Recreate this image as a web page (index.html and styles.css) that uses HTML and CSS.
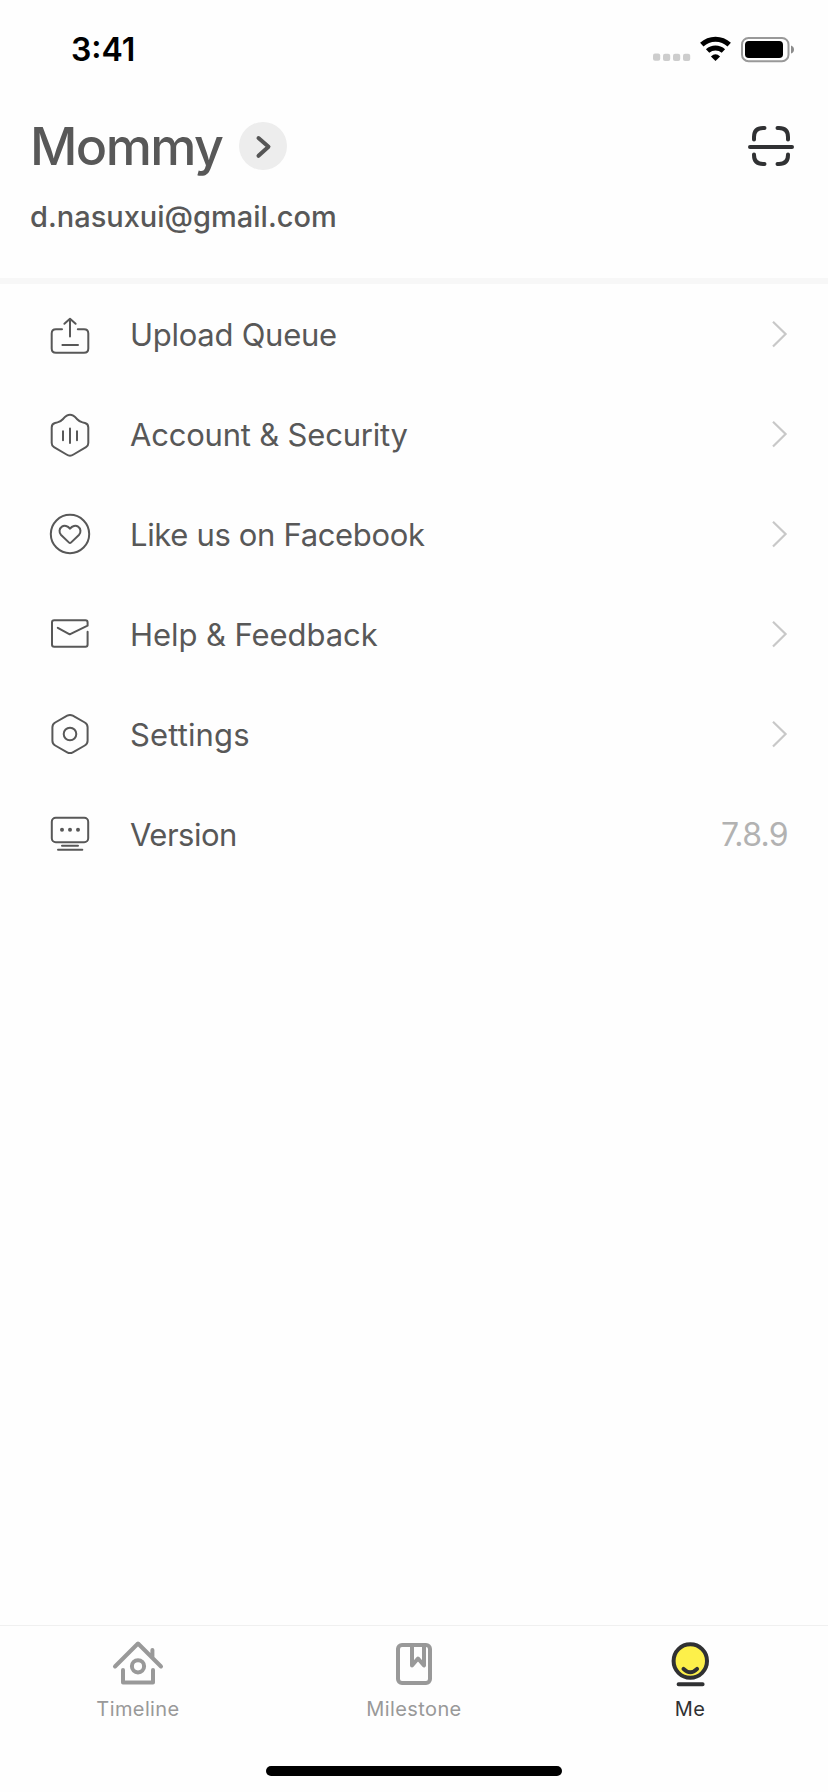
FILE: index.html
```html
<!DOCTYPE html>
<html lang="en">
<head>
<meta charset="utf-8">
<title>Me</title>
<link rel="stylesheet" href="styles.css">
</head>
<body>
<div class="screen">
  <div class="status">
    <span class="time">3:41</span>
    <svg class="status-icons" width="148" height="36" viewBox="650 31 148 36">
      <g fill="#cdcdcd"><rect x="653" y="53.5" width="7.2" height="7.2" rx="2"/><rect x="663" y="53.8" width="7.2" height="7.2" rx="2"/><rect x="673" y="53.8" width="7.2" height="7.2" rx="2"/><rect x="683" y="53.8" width="7.2" height="7.2" rx="2"/></g>
      <path d="M701.8 44.6A20 20 0 0 1 729.2 44.6M707.6 51A11.8 11.8 0 0 1 723.4 51" fill="none" stroke="#000" stroke-width="5"/>
      <path d="M710.9 56.5Q715.5 52.2 720.1 56.5L715.5 61Z"/>
      <rect x="742" y="38" width="46.5" height="23.2" rx="6.5" fill="none" stroke="#999" stroke-width="2"/>
      <rect x="745" y="41" width="38" height="17" rx="3.8"/>
      <path d="M791 45.5Q794 46.5 794 49.5T791 53.5Z" fill="#8c8c8c"/>
    </svg>
  </div>
  <header class="profile">
    <div class="profile-row">
      <h1 class="name">Mommy</h1>
      <svg class="name-more" width="48" height="48" viewBox="0 0 48 48" fill="none"><circle cx="24" cy="24" r="24" fill="#ededed"/><path d="M19.5 16L29.5 24.7L19.5 33.8" stroke="#555" stroke-width="4" stroke-linecap="round" stroke-linejoin="round"/></svg>
      <svg class="scan" width="48" height="48" viewBox="0 0 48 48" fill="none" stroke="#303133" stroke-width="4" stroke-linecap="round"><path d="M3 25H45M7 17.5V15Q7 6 16 6H17.5M30.5 6H32Q41 6 41 15V17.5M7 32.5V33Q7 42 16 42H17.5M30.5 42H32Q41 42 41 33V32.5"/></svg>
    </div>
    <div class="email">d.nasuxui@gmail.com</div>
  </header>
  <main class="menu">
    <div class="row">
      <svg class="icon" viewBox="0 0 48 48"><path d="M16 19.3H10Q5.7 19.3 5.7 23.6V38.4Q5.7 42.7 10 42.7H38Q42.3 42.7 42.3 38.4V23.6Q42.3 19.3 38 19.3H31.8M24 26.5V9M18.4 13.8L24 8.8L29.6 13.8M16.4 35H32"/></svg>
      <span class="label upload">Upload Queue</span><svg class="chev" viewBox="0 0 16 28"><path d="M1 1.7L13.6 14L1 26.5"/></svg>
    </div>
    <div class="row">
      <svg class="icon" viewBox="0 0 48 48"><path d="M20.8 5.7Q24 3.8 27.2 5.7Q29 6.8 31.2 9.2Q33.4 11.6 36.5 12.4L39 13Q42.3 13.8 42.3 17.5V33Q42.3 35.8 40 37.2L27.5 44.5Q24 46.8 20.5 44.5L8 37.2Q5.7 35.8 5.7 33V17.5Q5.7 13.8 9 13L11.5 12.4Q14.6 11.6 16.8 9.2Q19 6.8 20.8 5.7ZM17 21.3V30.3M24 18.5V33M31 21.3V30.3"/></svg>
      <span class="label account">Account &amp; Security</span><svg class="chev" viewBox="0 0 16 28"><path d="M1 1.7L13.6 14L1 26.5"/></svg>
    </div>
    <div class="row">
      <svg class="icon" viewBox="0 0 48 48"><circle cx="24" cy="24" r="19.2"/><path d="M24 18.7C21.8 16 18.4 15 15.9 16.6C13 18.5 12.8 22.6 15.1 25L22.8 32.4Q24 33.6 25.2 32.4L32.9 25C35.2 22.6 35 18.5 32.1 16.6C29.6 15 26.2 16 24 18.7Z"/></svg>
      <span class="label like">Like us on Facebook</span><svg class="chev" viewBox="0 0 16 28"><path d="M1 1.7L13.6 14L1 26.5"/></svg>
    </div>
    <div class="row">
      <svg class="icon" viewBox="0 0 48 48"><path d="M11.8 17.8L23.7 24.3L41.6 15.7V12.4Q41.6 10.2 39.4 10.2H8.2Q6 10.2 6 12.4V34.5Q6 36.7 8.2 36.7H39.4Q41.6 36.7 41.6 34.5V21.8"/></svg>
      <span class="label help">Help &amp; Feedback</span><svg class="chev" viewBox="0 0 16 28"><path d="M1 1.7L13.6 14L1 26.5"/></svg>
    </div>
    <div class="row">
      <svg class="icon" viewBox="0 0 48 48"><path d="M21.2 5.7Q24 4.1 26.8 5.7L38.8 12.5Q41.6 14.1 41.6 17.3V30.7Q41.6 33.9 38.8 35.5L26.8 42.3Q24 43.9 21.2 42.3L9.2 35.5Q6.4 33.9 6.4 30.7V17.3Q6.4 14.1 9.2 12.5Z"/><circle cx="24" cy="24" r="6.3"/></svg>
      <span class="label settings">Settings</span><svg class="chev" viewBox="0 0 16 28"><path d="M1 1.7L13.6 14L1 26.5"/></svg>
    </div>
    <div class="row">
      <svg class="icon" viewBox="0 0 48 48"><rect x="5.8" y="7.8" width="36.4" height="24.5" rx="4"/><path d="M16 35.8H32M12 39.7H36.3"/><g class="dots"><circle cx="16" cy="19.8" r="2"/><circle cx="24" cy="19.8" r="2"/><circle cx="32" cy="19.8" r="2"/></g></svg>
      <span class="label about">Version</span><span class="version">7.8.9</span>
    </div>
  </main>
  <nav class="tabs">
    <div class="tab">
      <svg class="tab-icon" viewBox="0 0 56 50"><path d="M5 28.5L28 5.5L51 28.5M42.4 12V19.5M13 32V44.4H43V32"/><circle cx="28" cy="28.3" r="6.1"/></svg>
      <span class="tab-label">Timeline</span>
    </div>
    <div class="tab">
      <svg class="tab-icon" viewBox="0 0 56 50"><rect x="12" y="7" width="32" height="38" rx="4"/><path d="M26 7V27.5L32 20.5L38 27.5V7"/></svg>
      <span class="tab-label">Milestone</span>
    </div>
    <div class="tab active">
      <svg class="tab-icon" viewBox="0 0 56 50"><circle cx="28.3" cy="23" r="16.7" fill="#fdf04a"/><path d="M21.5 30.8Q28.3 37.6 35.1 30.8M16.6 46.3H40.6"/></svg>
      <span class="tab-label">Me</span>
    </div>
  </nav>
  <div class="home-bar"></div>
</div>
</body>
</html>
```
FILE: styles.css
```css
* { box-sizing: border-box; }
body { margin: 0; background: #fefefe; font-family: Inter, "Liberation Sans", sans-serif; color: #585858; }
svg { display: block; flex: none; }
.screen { width: 828px; height: 1792px; display: flex; flex-direction: column; overflow: hidden; }
.status { height: 98px; padding: 0 30px 0 71px; display: flex; justify-content: space-between; align-items: center; }
.time { color: #000; font-size: 32px; font-weight: 600; line-height: 40px; padding-top: 2px; }
.profile { height: 186px; padding: 18px 33px 0 30px; border-bottom: 6px solid #f7f7f7; }
.profile-row { display: flex; align-items: center; height: 60px; }
.name { margin: 0; padding-top: 1px; width: 209px; font-size: 52px; font-weight: 500; line-height: 60px; letter-spacing: -1.6px; white-space: nowrap; }
.scan { margin-left: auto; }
.email { margin-top: 21px; font-size: 29px; font-weight: 500; line-height: 40px; }
.menu { flex: 1; }
.row { height: 100px; padding: 0 40px 0 46px; display: flex; align-items: center; }
.icon { width: 48px; height: 48px; fill: none; stroke: #585858; stroke-width: 2; stroke-linecap: round; stroke-linejoin: round; }
.dots { fill: #585858; stroke: none; }
.label { margin-left: 36px; padding-top: 2px; flex: 1; font-size: 31px; line-height: 40px; white-space: nowrap; }
.upload { letter-spacing: -0.27px; }
.account { letter-spacing: -0.2px; }
.like { letter-spacing: -0.34px; }
.help { letter-spacing: -0.07px; }
.settings { letter-spacing: 0.12px; }
.about { letter-spacing: -0.5px; }
.chev { width: 16px; height: 28px; fill: none; stroke: #c8c8c8; stroke-width: 2.2; }
.version { padding-top: 2px; font-size: 32px; line-height: 40px; letter-spacing: -0.7px; color: #b2b2b2; }
.tabs { height: 141px; border-top: 1px solid #f0f0f0; padding-top: 12px; display: grid; grid-template-columns: repeat(3, 1fr); }
.tab { display: flex; flex-direction: column; align-items: center; color: #999; }
.tab-icon { width: 56px; height: 50px; fill: none; stroke: currentColor; stroke-width: 4; stroke-linecap: round; stroke-linejoin: round; }
.tab-label { margin-top: 9px; font-size: 20px; line-height: 24px; letter-spacing: 0.4px; }
.active { color: #303133; }
.home-bar { flex: none; width: 296px; height: 10px; margin: 0 auto 16px; border-radius: 5px; background: #000; }
```
